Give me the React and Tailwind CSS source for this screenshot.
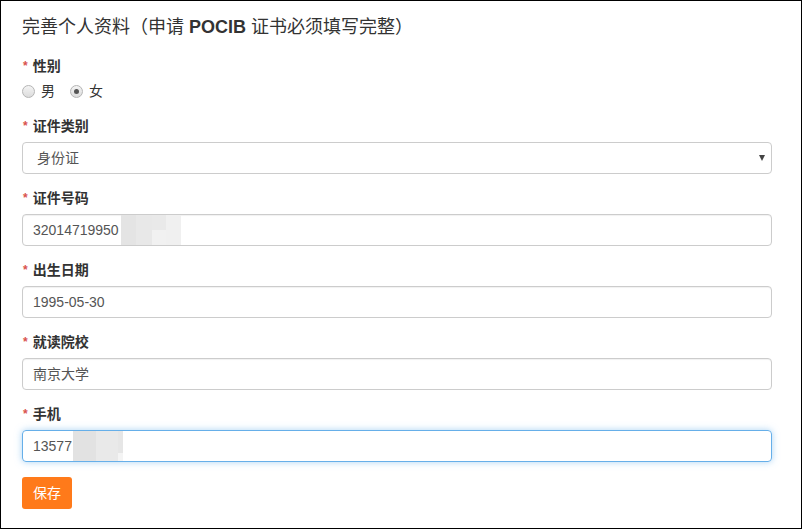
import React from 'react';

const font = "font-['Liberation_Sans','Noto_Sans_CJK_SC',sans-serif]";

function Label({ text }) {
  return (
    <div className="h-[17px] leading-[17px] mb-[7px] flex items-center text-[14px] font-bold text-[#333]">
      <span className="text-[#d9534f] text-[12px] mr-[5px] ml-px">*</span>
      {text}
    </div>
  );
}

function Field({ text, value, focused, children }) {
  return (
    <div className="mt-[16px]">
      <Label text={text} />
      <div
        className={`relative h-[32px] rounded-[4px] border flex items-center pl-[10px] text-[14px] text-[#555] ${
          focused
            ? 'border-[#66afe9] shadow-[0_0_7px_rgba(102,175,233,0.55)]'
            : 'border-[#ccc] shadow-[inset_0_1px_1px_rgba(0,0,0,0.06)]'
        }`}
      >
        <span className="relative z-0">{value}</span>
        {children}
      </div>
    </div>
  );
}

function Radio({ checked, label }) {
  return (
    <label className="flex items-center mr-[15px]">
      <span className="w-[13px] h-[13px] rounded-full border border-[#b5b5b5] bg-gradient-to-b from-[#f4f4f4] to-[#dcdcdc] flex items-center justify-center">
        {checked && <span className="w-[5px] h-[5px] rounded-full bg-[#555]" />}
      </span>
      <span className="ml-[6px] text-[14px] text-[#333]">{label}</span>
    </label>
  );
}

export default function App() {
  return (
    <div className={`w-[802px] h-[529px] border border-black bg-white px-[21px] ${font}`}>
      <h1 className="mt-[14px] h-[24px] leading-[24px] text-[18px] text-[#333]">
        完善个人资料（申请 <span className="font-semibold">POCIB</span> 证书必须填写完整）
      </h1>

      <div className="mt-[19px] w-[750px]">
        <Label text="性别" />
        <div className="flex items-center h-[18px]">
          <Radio label="男" />
          <Radio label="女" checked />
        </div>

        <div className="mt-[18px]">
          <Label text="证件类别" />
          <div className="relative h-[32px] rounded-[4px] border border-[#ccc] flex items-center pl-[14px] text-[14px] text-[#555]">
            身份证
            <span className="absolute right-[6px] top-[12px] w-0 h-0 border-l-[3.5px] border-r-[3.5px] border-t-[6px] border-l-transparent border-r-transparent border-t-[#444]" />
          </div>
        </div>

        <Field text="证件号码" value="32014719950">
          <div className="absolute left-[98px] top-0 h-[30px] w-[60px] flex">
            <div className="w-[15px] h-full bg-[#e4e4e4]" />
            <div className="w-[16px] h-full bg-[#e8e8e8]" />
            <div className="w-[14px] h-full flex flex-col">
              <div className="h-1/2 bg-[#e9e9e9]" />
              <div className="h-1/2 bg-[#f1f1f1]" />
            </div>
            <div className="w-[15px] h-full bg-[#f0f0f0]" />
          </div>
        </Field>

        <Field text="出生日期" value="1995-05-30" />
        <Field text="就读院校" value="南京大学" />

        <Field text="手机" value="13577" focused>
          <div className="absolute left-[50px] top-0 h-[30px] w-[50px] flex">
            <div className="w-[23px] h-full bg-[#e2e2e2]" />
            <div className="w-[22px] h-full bg-[#e9e9e9]" />
            <div className="w-[5px] h-full flex flex-col">
              <div className="h-[22px] bg-[#e6e6e6]" />
              <div className="flex-1 bg-[#f4f4f4]" />
            </div>
          </div>
        </Field>

        <button className="mt-[15px] w-[50px] h-[32px] rounded-[3px] bg-[#ff7a1a] text-white text-[14px] flex items-center justify-center">
          保存
        </button>
      </div>
    </div>
  );
}
